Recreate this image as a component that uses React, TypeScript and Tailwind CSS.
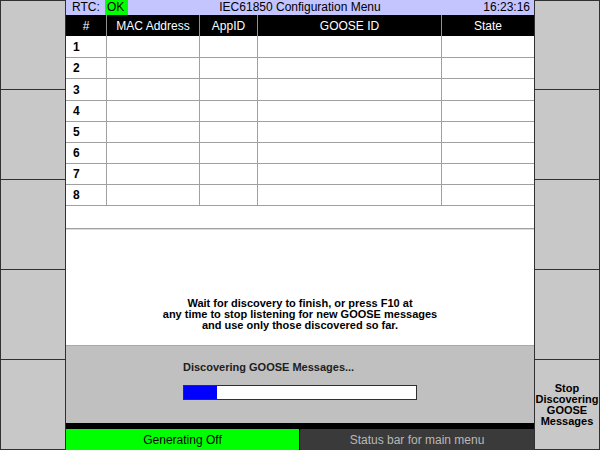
import React from "react"

const rows = [
  { n: 1, h: "h-[22px]", top: false },
  { n: 2, h: "h-[21px]", top: false },
  { n: 3, h: "h-[22px]", top: false },
  { n: 4, h: "h-[21px]", top: true },
  { n: 5, h: "h-[21px]", top: false },
  { n: 6, h: "h-[21px]", top: false },
  { n: 7, h: "h-[21px]", top: true },
  { n: 8, h: "h-[21px]", top: true },
]

function SideKeys({ labels }: { labels: string[][] }) {
  return (
    <div className="w-[66px] h-[450px] flex flex-col border-x border-[#303030] bg-[#c8c8c8]">
      {labels.map((lines, i) => (
        <div
          key={i}
          className={`${i === 0 ? "h-[90px] border-t" : "h-[90px]"} border-b border-[#303030] flex flex-col items-center justify-center text-[11px] leading-[11px] font-bold text-black text-center whitespace-nowrap`}
        >
          {lines.map((l) => (
            <span key={l}>{l}</span>
          ))}
        </div>
      ))}
    </div>
  )
}

export default function App() {
  const cols = "grid grid-cols-[41px_93px_58px_184px_92px]"

  return (
    <div className="w-[600px] h-[450px] flex overflow-hidden bg-black font-['Liberation_Sans',Arial,sans-serif]">
      <SideKeys labels={[[], [], [], [], []]} />

      <div className="w-[468px] h-[450px] flex flex-col bg-white">
        {/* title bar */}
        <div className="h-[15px] flex items-center bg-[#c4c4ff] text-[12px] leading-[15px] text-black relative">
          <span className="pl-[6px] w-[39px]">RTC:</span>
          <span className="bg-[#00ff00] w-[23px] h-[15px] pl-[2px]">OK</span>
          <span className="absolute left-0 right-0 text-center">IEC61850 Configuration Menu</span>
          <span className="ml-auto pr-[4px]">16:23:16</span>
        </div>

        {/* table header */}
        <div className={`${cols} h-[21px] bg-black text-white text-[12px]`}>
          {["#", "MAC Address", "AppID", "GOOSE ID", "State"].map((h, i) => (
            <div
              key={h}
              className={`flex items-center justify-center ${i < 4 ? "border-r border-[#909090]" : ""}`}
            >
              {h}
            </div>
          ))}
        </div>

        {/* rows */}
        {rows.map((r) => (
          <div key={r.n} className={`${cols} ${r.h}`}>
            <div
              className={`border-r border-b border-[#a0a0a0] pl-[7px] text-[12px] font-bold text-black flex ${r.top ? "items-start pt-[1px]" : "items-center"}`}
            >
              {r.n}
            </div>
            <div className="border-r border-b border-[#a0a0a0]" />
            <div className="border-r border-b border-[#a0a0a0]" />
            <div className="border-r border-b border-[#a0a0a0]" />
            <div className="border-b border-[#a0a0a0]" />
          </div>
        ))}

        <div className="h-[23px] border-b border-[#a0a0a0]" />
        <div className="h-px bg-[#dcdcdc]" />

        {/* message area */}
        <div className="flex-1 flex flex-col items-center justify-end pb-[14px] text-[11px] leading-[11px] font-bold text-black text-center">
          <span>Wait for discovery to finish, or press F10 at</span>
          <span>any time to stop listening for new GOOSE messages</span>
          <span>and use only those discovered so far.</span>
        </div>

        {/* progress area */}
        <div className="h-[78px] bg-[#c0c0c0] border-t border-[#a8a8a8] pl-[117px] pt-[16px]">
          <div className="text-[11px] leading-[11px] font-bold text-[#202020]">Discovering GOOSE Messages...</div>
          <div className="mt-[12px] w-[234px] h-[15px] border border-[#303030] bg-white flex">
            <div className="w-[33px] h-full bg-[#0000ff]" />
          </div>
        </div>

        <div className="h-[6px] bg-black" />

        {/* status bar */}
        <div className="h-[21px] flex bg-black text-[12px]">
          <div className="w-[233px] bg-[#00ff00] text-black flex items-center justify-center">Generating Off</div>
          <div className="ml-px flex-1 bg-[#3a3a3a] text-[#b8b8b8] flex items-center justify-center">
            Status bar for main menu
          </div>
        </div>
      </div>

      <SideKeys labels={[[], [], [], [], ["Stop", "Discovering", "GOOSE", "Messages"]]} />
    </div>
  )
}
